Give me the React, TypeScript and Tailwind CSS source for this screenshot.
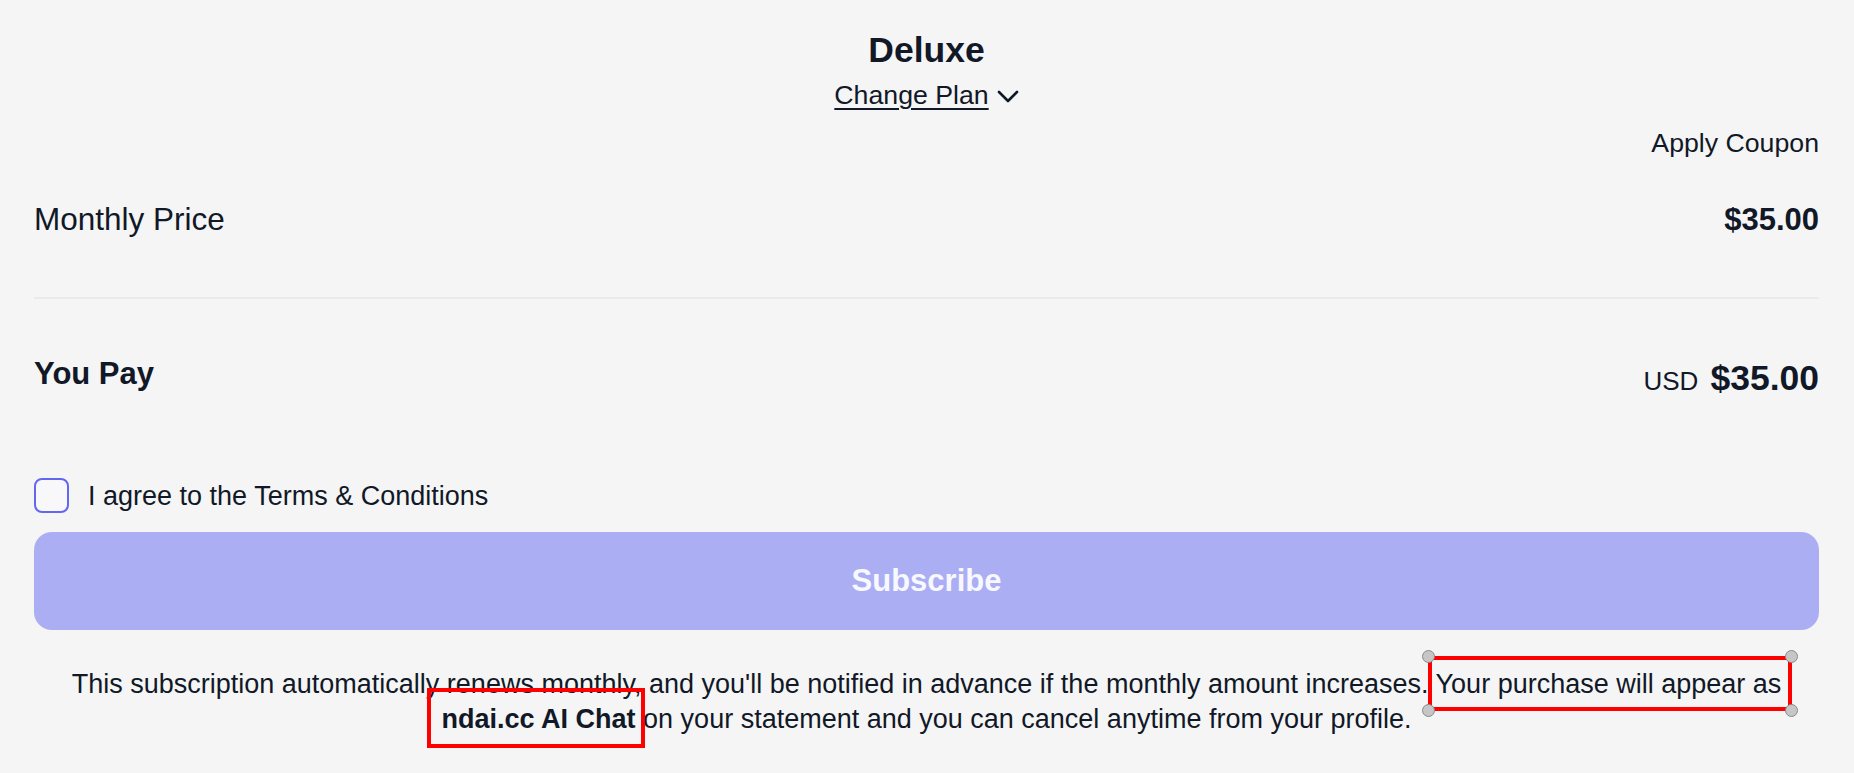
import React from "react";

function Handle({ pos }: { pos: string }) {
  return (
    <span
      className={`absolute h-[13px] w-[13px] rounded-full border border-[#8a8a8a] bg-[#c6c6c6] ${pos}`}
    />
  );
}

export default function App() {
  return (
    <div className="min-h-screen w-full bg-[#f5f5f5] font-['Liberation_Sans',Arial,sans-serif] text-[#111827]">
      <div className="pl-[34px] pr-[35px] pt-[30px]">
        <div className="flex flex-col items-center">
          <h1 className="text-[35.5px] leading-[40px] font-bold">Deluxe</h1>
          <button className="mt-[10px] flex items-center gap-[8px] text-[26.7px] leading-[30px]">
            <span className="underline decoration-[2px] underline-offset-[4px]">Change Plan</span>
            <svg width="22" height="14" viewBox="0 0 22 14" fill="none" className="mt-[4px]">
              <polyline
                points="2,2 11,11 20,2"
                stroke="#111827"
                strokeWidth="2.6"
                strokeLinecap="round"
                strokeLinejoin="round"
              />
            </svg>
          </button>
        </div>

        <div className="mt-[18px] flex justify-end text-[26.7px] leading-[30px]">Apply Coupon</div>

        <div className="mt-[43px] flex items-baseline justify-between">
          <span className="text-[31.5px] leading-[36px]">Monthly Price</span>
          <span className="text-[31px] leading-[36px] font-bold">$35.00</span>
        </div>

        <div className="mt-[59px] h-[2px] bg-[#e9eaec]" />

        <div className="mt-[57px] flex items-start justify-between">
          <span className="text-[31px] leading-[36px] font-bold">You Pay</span>
          <div className="mt-[2px] flex items-baseline gap-[12px]">
            <span className="text-[26px] leading-[40px]">USD</span>
            <span className="text-[35.5px] leading-[40px] font-bold">$35.00</span>
          </div>
        </div>

        <label className="mt-[77px] flex items-center gap-[19px]">
          <span className="h-[35px] w-[35px] rounded-[8px] border-2 border-[#6366f1] bg-[#f8f8fa]" />
          <span className="text-[27px] leading-[30px]">I agree to the Terms &amp; Conditions</span>
        </label>

        <button className="mt-[19px] flex h-[98px] w-full items-center justify-center rounded-[18px] bg-[#acaef3] text-[31px] font-bold text-[#f8f8ff]">
          Subscribe
        </button>

        <p className="mt-[37px] text-center text-[27px] leading-[35px]">
          This subscription automatically renews monthly, and you'll be notified in advance if the monthly amount
          increases.{" "}
          <span className="relative">
            Your purchase will appear as
            <span className="pointer-events-none absolute -top-[13px] -bottom-[12px] -left-[8px] -right-[11px] border-[4px] border-[#ff0000]" />
            <Handle pos="-top-[19px] -left-[14px]" />
            <Handle pos="-top-[19px] -right-[17px]" />
            <Handle pos="-bottom-[18px] -left-[14px]" />
            <Handle pos="-bottom-[18px] -right-[17px]" />
          </span>{" "}
          <span className="relative font-bold">
            ndai.cc AI Chat
            <span className="pointer-events-none absolute -top-[16px] -bottom-[14px] -left-[15px] -right-[9px] border-[4px] border-[#ff0000]" />
          </span>{" "}
          on your statement and you can cancel anytime from your profile.
        </p>
      </div>
    </div>
  );
}
